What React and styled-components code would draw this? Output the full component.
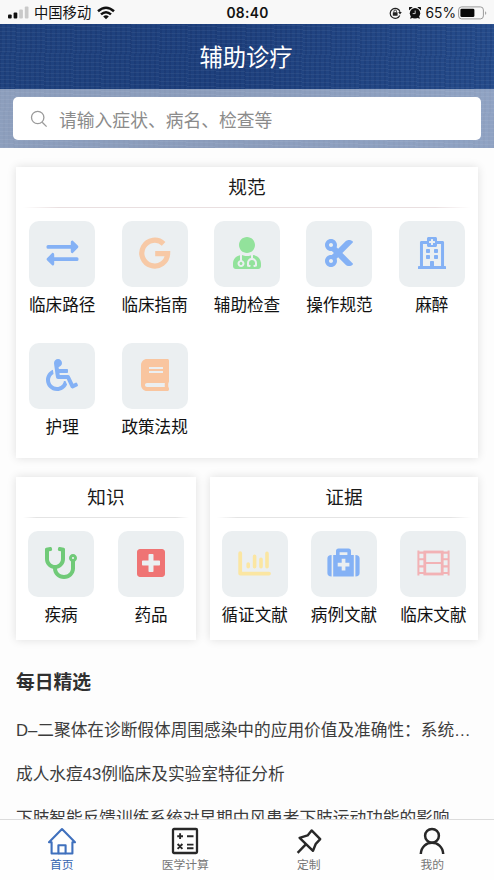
import React from 'react'
import styled, {createGlobalStyle} from 'styled-components'
import {
  FaUserMd,
  FaCut,
  FaRegHospital,
  FaWheelchair,
  FaBook,
  FaStethoscope,
  FaPlusSquare
} from 'react-icons/fa'

const GlobalStyle = createGlobalStyle`
  * {
    box-sizing: border-box;
  }
  body {
    margin: 0;
    font-family: "Liberation Sans", "Noto Sans CJK SC", sans-serif;
    color: #1a1a1a;
    background: #fdfdfd;
  }
  svg {
    display: block;
    flex: none;
  }
`

const Page = styled.div`
  display: flex;
  flex-direction: column;
  height: 880px;
  overflow: hidden;
`

const StatusBar = styled.div`
  display: grid;
  grid-template-columns: 1fr auto 1fr;
  align-items: center;
  flex: none;
  height: 24px;
  padding: 1px 7px 0 8px;
  background: #f8f8f8;
  color: #111;
`
const StatusSide = styled.div`
  display: flex;
  align-items: center;
  justify-content: ${props => props.$end ? 'flex-end' : 'flex-start'};
  font-size: 14.3px;
  line-height: 20px;
`
const Carrier = styled.span`
  margin: 0 6px 0 5px;
`
const Clock = styled.div`
  font-family: Inter, sans-serif;
  font-size: 13.8px;
  font-weight: 600;
  letter-spacing: 0.3px;
`
const Percent = styled.span`
  margin: 0 2px 0 5px;
  font-family: Inter, sans-serif;
  font-size: 13.8px;
`
const StatusIcons = styled.div`
  display: flex;
  align-items: center;
  gap: 7px;
`

const Fabric = styled.div`
  flex: none;
  background:
    repeating-linear-gradient(2deg, rgba(255, 255, 255, 0.05) 0 1px, transparent 1px 4px),
    repeating-linear-gradient(91deg, rgba(5, 20, 70, 0.12) 0 2px, transparent 2px 5px),
    linear-gradient(95deg, #20437f, #1e407d 45%, #264c8b);
`
const Header = styled.header`
  display: flex;
  align-items: center;
  justify-content: center;
  height: 65px;
  padding: 0 2px 1px 0;
  font-size: 23.3px;
  color: #fff;
`
const SearchArea = styled.div`
  height: 59px;
  padding: 8px 13px 0;
  background: rgba(255, 255, 255, 0.49);
`
const SearchBox = styled.div`
  display: flex;
  align-items: center;
  height: 43px;
  padding-left: 17px;
  border-radius: 5px;
  background: #fff;
  font-size: 17.8px;
  color: #8b8b8b;
`
const Placeholder = styled.span`
  margin-left: 11px;
`

const Content = styled.main`
  flex: 1;
  min-height: 0;
  padding: 19px 16px 0;
  overflow: hidden;
`
const Card = styled.section`
  width: ${props => props.$width}px;
  height: ${props => props.$height}px;
  background: #fff;
  box-shadow: 0 0 9px rgba(0, 0, 0, 0.12);
`
const CardTitle = styled.h2`
  display: flex;
  align-items: center;
  justify-content: center;
  height: 40px;
  margin: 0;
  padding-bottom: 4px;
  font-size: 18.7px;
  font-weight: 400;
`
const Divider = styled.div`
  height: 1px;
  margin: 0 7px;
  background: linear-gradient(90deg, transparent, ${props => props.$color || '#e4e4e4'} 8%, ${props => props.$color || '#e4e4e4'} 92%, transparent);
`
const Grid = styled.div`
  display: grid;
  grid-template-columns: repeat(${props => props.$columns}, 1fr);
  grid-auto-rows: 122px;
  padding-top: 13px;
`
const Item = styled.div`
  display: flex;
  flex-direction: column;
  align-items: center;
  font-size: 16.6px;
  line-height: 24px;
  color: #111;
  white-space: nowrap;
`
const Tile = styled.div`
  display: flex;
  align-items: center;
  justify-content: center;
  width: 66px;
  height: 66px;
  margin-bottom: 7px;
  padding-bottom: 2px;
  border-radius: 10px;
  background: #ebeff1;
  color: ${props => props.$color};
`
const CardRow = styled.div`
  display: flex;
  gap: 14px;
  margin-top: 19px;
`

const DailyTitle = styled.h3`
  margin: 29px 0 0;
  font-size: 18.8px;
  font-weight: 700;
  line-height: 28px;
  color: #303030;
`
const Articles = styled.ul`
  margin: 12px 0 0;
  padding: 0;
  list-style: none;
`
const Article = styled.li`
  height: 44px;
  font-size: 16.68px;
  line-height: 44px;
  white-space: nowrap;
  color: #3c3c3c;
`

const TabBar = styled.nav`
  display: grid;
  grid-template-columns: repeat(4, 1fr);
  flex: none;
  height: 61px;
  border-top: 1px solid #dcdcdc;
  background: #fefefe;
`
const Tab = styled.div`
  display: flex;
  flex-direction: column;
  align-items: center;
  padding-top: 7px;
  font-size: 11.8px;
  line-height: 16px;
  color: ${props => props.$active ? '#3564b0' : '#777'};
`
const TabIcon = styled.div`
  height: 30px;
  color: ${props => props.$active ? '#3f70bd' : '#282828'};
`

const SignalIcon = () => (
  <svg width="21" height="14" viewBox="0 0 21 14" fill="#111">
    <rect x="0" y="8.5" width="3.7" height="4" rx="1"/>
    <rect x="5.6" y="6.5" width="3.7" height="6" rx="1"/>
    <rect x="11.2" y="3.5" width="3.7" height="9" rx="1" fill="#c9c9c9"/>
    <rect x="16.8" y="0.5" width="3.7" height="12" rx="1" fill="#c9c9c9"/>
  </svg>
)

const WifiIcon = () => (
  <svg width="18" height="14" viewBox="0 0 18 14" fill="none" stroke="#111" strokeWidth="2.5">
    <path d="M1 5.2Q9-1.8 17 5.2"/>
    <path d="M4 8.4Q9 4 14 8.4"/>
    <path d="M9 13.2L6.2 10.5Q9 8.2 11.8 10.5Z" fill="#111" stroke="none"/>
  </svg>
)

const LockIcon = () => (
  <svg width="13" height="12" viewBox="0 0 13 12" fill="none" stroke="#222">
    <path d="M10.8 8.4A5 5 0 1 1 11 4.8" strokeWidth="1.2"/>
    <path d="M9.2 5h3.6L11 7.6z" fill="#222" stroke="none"/>
    <rect x="3.8" y="5.2" width="4.8" height="3.6" rx="0.5" fill="#222" stroke="none"/>
    <path d="M4.9 5.4V4.3a1.3 1.3 0 0 1 2.6 0v1.1" strokeWidth="0.9"/>
  </svg>
)

const AlarmIcon = () => (
  <svg width="12" height="12" viewBox="0 0 12 12" fill="#111">
    <circle cx="6" cy="6.2" r="5.2"/>
    <path d="M0.2 3.3A2 2 0 0 1 3.6 0.3zM11.8 3.3A2 2 0 0 0 8.4 0.3zM1 11.8l1-2.8 2.4 1.8zM11 11.8l-1-2.8-2.4 1.8z"/>
    <path d="M6.2 3.5v3.1H3.7" stroke="#f8f8f8" strokeWidth="0.8" fill="none"/>
  </svg>
)

const BatteryIcon = () => (
  <svg width="29" height="14" viewBox="0 0 29 14">
    <rect x="0.6" y="0.9" width="24.8" height="12" rx="3" fill="none" stroke="#999"/>
    <rect x="2.4" y="2.7" width="14" height="8.4" rx="1.4" fill="#080808"/>
    <path d="M27 5.2q1.3 0.4 1.3 1.8T27 8.8z" fill="#aaa"/>
  </svg>
)

const SearchIcon = () => (
  <svg width="18" height="18" viewBox="0 0 18 18" fill="none" stroke="#9a9a9a" strokeWidth="1.3">
    <circle cx="7.7" cy="7.5" r="6.2"/>
    <path d="M12.2 12.2L16.6 16.6"/>
  </svg>
)

const ArrowsIcon = () => (
  <svg width="33" height="26" viewBox="0 0 33 26" fill="currentColor">
    <path d="M2 5H24.8V2Q24.8 0.3 26.6 0.4L32 5.8Q32.8 6.8 32 7.8L26.6 13.2Q24.8 13.3 24.8 11.6V8.8H2Q0.5 8.8 0.5 7.3V6.5Q0.5 5 2 5z"/>
    <path d="M31 17.2H8.2V14.4Q8.2 12.7 6.4 12.8L1 18.2Q0.2 19.2 1 20.2L6.4 25.6Q8.2 25.7 8.2 24V21H31Q32.5 21 32.5 19.5V18.7Q32.5 17.2 31 17.2z"/>
  </svg>
)

const GoogleIcon = () => (
  <svg width="32" height="32" viewBox="0 0 32 32" fill="none" stroke="currentColor" strokeWidth="5.2">
    <path d="M24.6 6.8A12.9 12.9 0 1 0 28.6 16.6H16.2"/>
  </svg>
)

const ChartIcon = () => (
  <svg width="33" height="25" viewBox="0 0 33 25" fill="none" stroke="currentColor" strokeWidth="3.8" strokeLinecap="round">
    <path d="M2.2 2.2V22.6H31" strokeLinejoin="round"/>
    <path d="M10.2 13V15.8M16.6 5.2V15.8M23 8.2V15.8M29 2.4V15.8" strokeWidth="3.6"/>
  </svg>
)

const MedkitIcon = () => (
  <svg width="33" height="30" viewBox="0 0 33 30" fill="currentColor">
    <path d="M4.6 7v21.5C1.7 28.5 0.4 27.3 0.4 25V10.5C0.4 8.2 1.7 7 4.6 7zM28.4 7v21.5c2.9 0 4.2-1.2 4.2-3.5V10.5C32.6 8.2 31.3 7 28.4 7z"/>
    <path fillRule="evenodd" d="M6.2 7H9V3Q9 0.5 11.5 0.5h10Q24 0.5 24 3v4h2.8v21.5H6.2zM12.6 4.2V7h7.8V4.2zM14.7 10.8v4h-4v3.8h4v4h3.7v-4h4v-3.8h-4v-4z"/>
  </svg>
)

const FilmIcon = () => (
  <svg width="33" height="26" viewBox="0 0 33 26" fill="none" stroke="currentColor" strokeWidth="2.1">
    <path d="M1.4 0.5V25.5M31.6 0.5V25.5" strokeWidth="2"/>
    <rect x="7.8" y="2" width="17.4" height="22" strokeWidth="2.8"/>
    <path d="M8 13H25M1 2.6H8M1 9.2H8M1 16.4H8M1 23H8M25 2.6H32M25 9.2H32M25 16.4H32M25 23H32"/>
  </svg>
)

const HomeIcon = () => (
  <svg width="30" height="29" viewBox="0 0 30 29" fill="none" stroke="currentColor" strokeWidth="2.1" strokeLinejoin="round">
    <path d="M15 2L28 15.2H25.4V26.5H18.6V18.3H11.4V26.5H4.6V15.2H2Z"/>
    <path d="M11.4 26.5H18.6"/>
  </svg>
)

const CalculatorIcon = () => (
  <svg width="28" height="28" viewBox="0 0 28 28" fill="none" stroke="currentColor" strokeWidth="1.9">
    <rect x="2" y="2" width="24" height="24" rx="1" strokeWidth="2.3"/>
    <path d="M6.2 9.2H12M9.1 6.3V12.1M16 9.2H22.5M6.6 17L11.4 21.8M11.4 17L6.6 21.8M16 17.6H22.5M16 21.3H22.5"/>
  </svg>
)

const PinIcon = () => (
  <svg width="28" height="28" viewBox="0 0 28 28" fill="none" stroke="currentColor" strokeWidth="2.4" strokeLinejoin="round">
    <path d="M16.6 3.4L25.2 12.2 20.8 16.8 18 23.8 4.6 10.8 12.6 8.4Z"/>
    <path d="M10.8 17.4L2.6 25.8"/>
  </svg>
)

const UserIcon = () => (
  <svg width="28" height="28" viewBox="0 0 28 28" fill="none" stroke="currentColor" strokeWidth="2.5">
    <circle cx="14" cy="8.8" r="6.9"/>
    <path d="M2.8 27C3.5 12 24.5 12 25.2 27"/>
  </svg>
)

const standards = [
  {name: '临床路径', color: '#84b1f5', icon: <ArrowsIcon/>},
  {name: '临床指南', color: '#f7c9a6', icon: <GoogleIcon/>},
  {name: '辅助检查', color: '#92e29b', icon: <FaUserMd size={32}/>},
  {name: '操作规范', color: '#84b1f5', icon: <FaCut size={32}/>},
  {name: '麻醉', color: '#84b1f5', icon: <FaRegHospital size={32}/>},
  {name: '护理', color: '#84b1f5', icon: <FaWheelchair size={32}/>},
  {name: '政策法规', color: '#f9c59f', icon: <FaBook size={32}/>}
]

const knowledge = [
  {name: '疾病', color: '#70ca78', icon: <FaStethoscope size={32}/>},
  {name: '药品', color: '#ef7474', icon: <FaPlusSquare size={32}/>}
]

const evidence = [
  {name: '循证文献', color: '#fbe6a2', icon: <ChartIcon/>},
  {name: '病例文献', color: '#84b1f5', icon: <MedkitIcon/>},
  {name: '临床文献', color: '#f2b2b5', icon: <FilmIcon/>}
]

const articles = [
  'D–二聚体在诊断假体周围感染中的应用价值及准确性：系统…',
  '成人水痘43例临床及实验室特征分析',
  '下肢智能反馈训练系统对早期中风患者下肢运动功能的影响'
]

const tabs = [
  {name: '首页', icon: <HomeIcon/>, active: true},
  {name: '医学计算', icon: <CalculatorIcon/>},
  {name: '定制', icon: <PinIcon/>},
  {name: '我的', icon: <UserIcon/>}
]

function Section({title, items, columns, width, height, line}) {
  return (
    <Card $width={width} $height={height}>
      <CardTitle>{title}</CardTitle>
      <Divider $color={line}/>
      <Grid $columns={columns}>
        {items.map(item => (
          <Item key={item.name}>
            <Tile $color={item.color}>{item.icon}</Tile>
            {item.name}
          </Item>
        ))}
      </Grid>
    </Card>
  )
}

function App() {
  return (
    <Page>
      <GlobalStyle/>
      <StatusBar>
        <StatusSide>
          <SignalIcon/>
          <Carrier>中国移动</Carrier>
          <WifiIcon/>
        </StatusSide>
        <Clock>08:40</Clock>
        <StatusSide $end>
          <StatusIcons>
            <LockIcon/>
            <AlarmIcon/>
          </StatusIcons>
          <Percent>65%</Percent>
          <BatteryIcon/>
        </StatusSide>
      </StatusBar>
      <Fabric>
        <Header>辅助诊疗</Header>
        <SearchArea>
          <SearchBox>
            <SearchIcon/>
            <Placeholder>请输入症状、病名、检查等</Placeholder>
          </SearchBox>
        </SearchArea>
      </Fabric>
      <Content>
        <Section title="规范" items={standards} columns={5} width={462} height={291} line="#e9dfe0"/>
        <CardRow>
          <Section title="知识" items={knowledge} columns={2} width={180} height={163}/>
          <Section title="证据" items={evidence} columns={3} width={268} height={163}/>
        </CardRow>
        <DailyTitle>每日精选</DailyTitle>
        <Articles>
          {articles.map(text => <Article key={text}>{text}</Article>)}
        </Articles>
      </Content>
      <TabBar>
        {tabs.map(tab => (
          <Tab key={tab.name} $active={tab.active}>
            <TabIcon $active={tab.active}>{tab.icon}</TabIcon>
            {tab.name}
          </Tab>
        ))}
      </TabBar>
    </Page>
  )
}

export default App
